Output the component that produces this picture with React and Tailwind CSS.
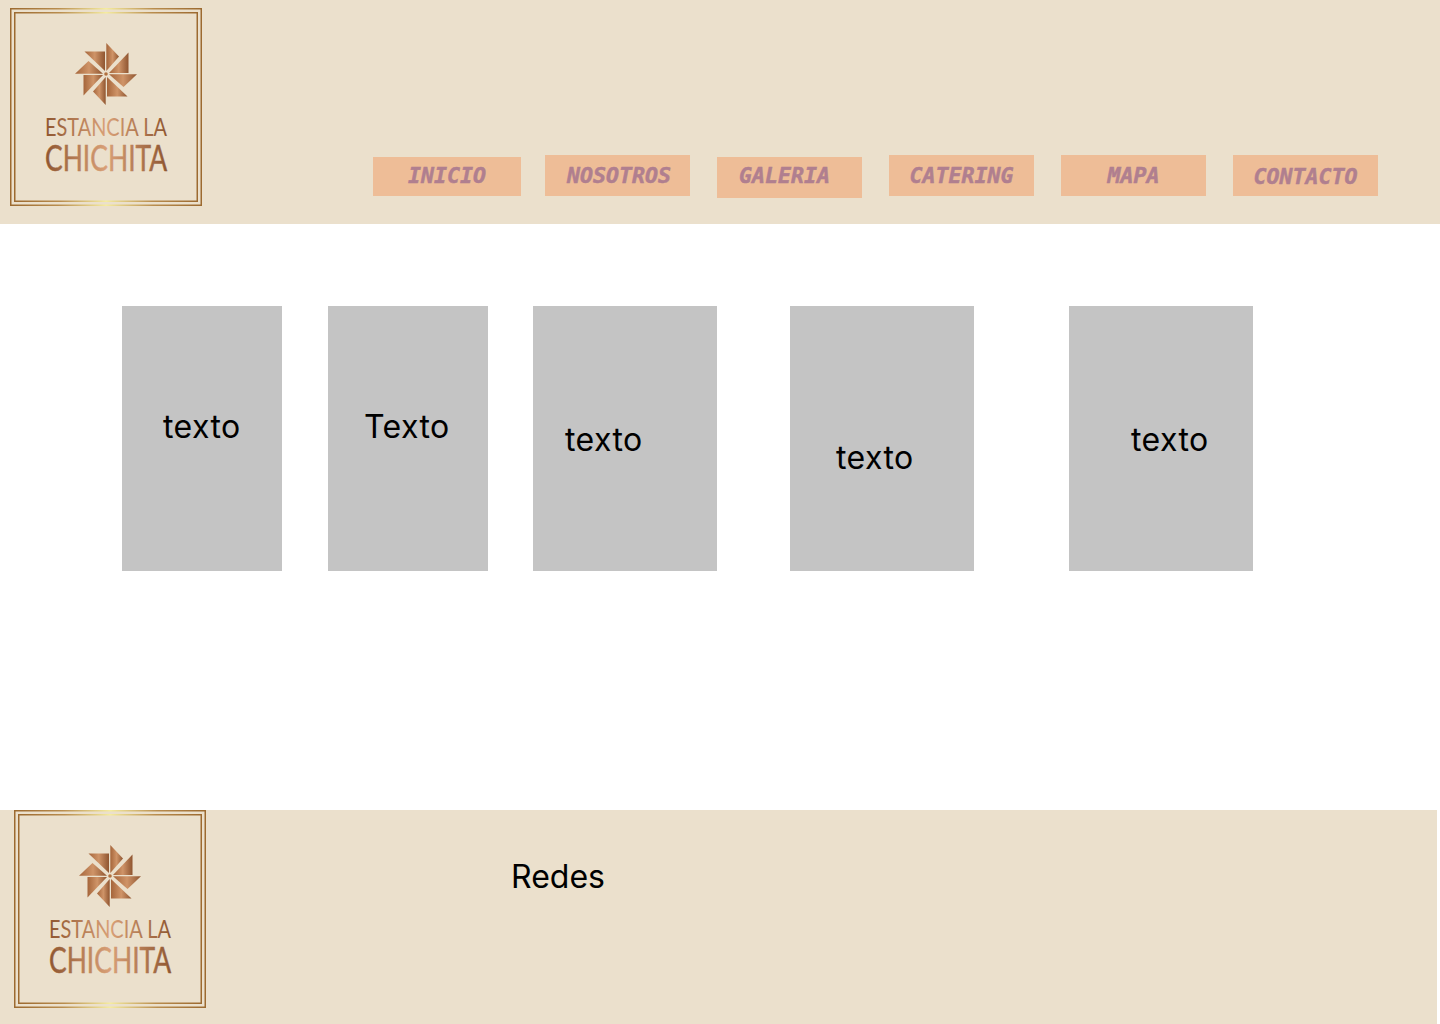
const BEIGE = 'bg-[#ebe0cc]';

const NAV_ITEMS = [
  { label: 'INICIO', box: 'w-[148px] h-[39px] mt-[2px]' },
  { label: 'NOSOTROS', box: 'w-[145px] h-[41px] ml-[24px] pl-[3px] pt-[1px]' },
  { label: 'GALERIA', box: 'w-[145px] h-[41px] mt-[2px] ml-[27px] pr-[10px] pb-[2px]' },
  { label: 'CATERING', box: 'w-[145px] h-[41px] ml-[27px] pt-[1px]' },
  { label: 'MAPA', box: 'w-[145px] h-[41px] ml-[27px] pt-[1px]' },
  { label: 'CONTACTO', box: 'w-[145px] h-[41px] ml-[27px] pt-[3px]' },
];

const CARDS = [
  { text: 'texto', box: 'w-[160px] ml-[122px] pt-[101px] pl-[41px]' },
  { text: 'Texto', box: 'w-[160px] ml-[46px] pt-[101px] pl-[36px]' },
  { text: 'texto', box: 'w-[184px] ml-[45px] pt-[114px] pl-[32px]' },
  { text: 'texto', box: 'w-[184px] ml-[73px] pt-[132px] pl-[46px]' },
  { text: 'texto', box: 'w-[184px] ml-[95px] pt-[114px] pl-[62px]' },
];

// two alternating blades, turned four times around the centre
const BLADES = [
  [[0.3, -31], [13, -17.5], [0.3, -3]],
  [[22.5, -21.5], [22.5, -1], [3, -1]],
];

function turn([x, y], times) {
  let p = [x, y];
  for (let i = 0; i < times; i++) p = [-p[1], p[0]];
  return p.join(',');
}

function Pinwheel({ id }) {
  return (
    <g transform="translate(96 66)">
      {[0, 1, 2, 3].map((t) =>
        BLADES.map((blade, b) => (
          <polygon key={`${t}-${b}`} points={blade.map((p) => turn(p, t)).join(' ')} fill={`url(#${id})`} />
        ))
      )}
      <circle r="1.8" fill="#b0703f" />
    </g>
  );
}

function Logo({ id }) {
  return (
    <svg width="192" height="198" viewBox="0 0 192 198" className="block shrink-0">
      <defs>
        <linearGradient id={`${id}-gold`} x1="0" x2="1" y1="0" y2="0">
          <stop offset="0" stopColor="#9c6a30" />
          <stop offset="0.25" stopColor="#b98d4e" />
          <stop offset="0.5" stopColor="#f5eca0" />
          <stop offset="0.75" stopColor="#b98d4e" />
          <stop offset="1" stopColor="#9c6a30" />
        </linearGradient>
        <linearGradient id={`${id}-blade`} x1="0" x2="1" y1="0" y2="0">
          <stop offset="0" stopColor="#a5653a" />
          <stop offset="0.5" stopColor="#cf9468" />
          <stop offset="1" stopColor="#8f5530" />
        </linearGradient>
        <linearGradient id={`${id}-text`} x1="0" x2="1" y1="0" y2="0">
          <stop offset="0" stopColor="#8f5630" />
          <stop offset="0.5" stopColor="#d9a077" />
          <stop offset="1" stopColor="#8f5630" />
        </linearGradient>
      </defs>
      <rect x="0.75" y="0.75" width="190.5" height="196.5" fill="none" strokeWidth="1.5" stroke={`url(#${id}-gold)`} />
      <rect x="4.75" y="4.75" width="182.5" height="188.5" fill="none" strokeWidth="1.5" stroke={`url(#${id}-gold)`} />
      <Pinwheel id={`${id}-blade`} />
      <text transform="translate(35 128) scale(0.797 1)" fontFamily="Lato, sans-serif" fontSize="25" fill={`url(#${id}-text)`}>
        ESTANCIA LA
      </text>
      <text transform="translate(35 163) scale(0.715 1)" fontFamily="Lato, sans-serif" fontSize="37" fill={`url(#${id}-text)`} stroke={`url(#${id}-text)`} strokeWidth="0.5">
        CHICHITA
      </text>
    </svg>
  );
}

export default function App() {
  return (
    <div className="w-[1440px] h-[1024px] bg-white font-['Inter',sans-serif] text-black overflow-hidden">
      {/* ── Header ── */}
      <header className={`h-[224px] ${BEIGE} flex items-start pt-[8px] pl-[10px]`}>
        <Logo id="top" />
        <nav className="flex items-start mt-[147px] ml-[171px]">
          {NAV_ITEMS.map((item) => (
            <a
              key={item.label}
              className={`${item.box} bg-[#eebd97] flex items-center justify-center font-['DejaVu_Sans_Mono',monospace] font-bold italic text-[21.6px] text-[#b07f8f] [-webkit-text-stroke:0.5px_#b07f8f]`}
            >
              {item.label}
            </a>
          ))}
        </nav>
      </header>

      {/* ── Cards ── */}
      <main className="h-[586px] pt-[82px] flex items-start">
        {CARDS.map((card, i) => (
          <div key={i} className={`${card.box} h-[265px] bg-[#c4c4c4] text-[32px] leading-[39px] tracking-[0.4px]`}>
            {card.text}
          </div>
        ))}
      </main>

      {/* ── Footer ── */}
      <footer className={`h-[214px] w-[1437px] ${BEIGE} flex items-start pl-[14px]`}>
        <Logo id="bottom" />
        <p className="ml-[305px] mt-[47px] text-[32px] leading-[39px]">Redes</p>
      </footer>
    </div>
  );
}
